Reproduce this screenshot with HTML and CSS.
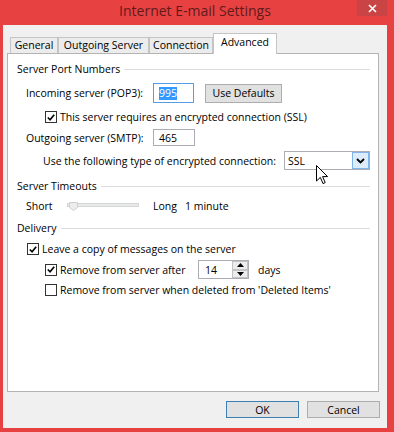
FILE: index.html
```html
<!DOCTYPE html>
<html lang="en">
<head>
    <meta charset="UTF-8">
    <title>Internet E-mail Settings</title>
    <link rel="stylesheet" href="styles.css">
</head>
<body>
    <div class="window">
        <div class="titlebar">
            <span></span>
            <div class="title">Internet E-mail Settings</div>
            <div class="close-wrap">
                <div class="close">
                    <svg width="9" height="9" viewBox="0 0 9 9"><path d="M1 1 L8 8 M8 1 L1 8" stroke="#fff" stroke-width="1.6"/></svg>
                </div>
            </div>
        </div>

        <div class="client">
            <div class="tabs">
                <div class="tab tab-general">General</div>
                <div class="tab tab-outgoing">Outgoing Server</div>
                <div class="tab tab-connection">Connection</div>
                <div class="tab tab-advanced active">Advanced</div>
            </div>

            <div class="panel">
                <div class="group group-ports">
                    <span>Server Port Numbers</span><div class="rule"></div>
                </div>
                <div class="row row-incoming">
                    <label class="field-label">Incoming server (POP3):</label>
                    <div class="textbox focused port-in"><span class="selected-text">995</span></div>
                    <button class="btn btn-defaults">Use Defaults</button>
                </div>
                <div class="row row-ssl">
                    <span class="check checked"><svg width="11" height="11" viewBox="0 0 11 11"><path d="M2 5.5 L4.5 8 L9 2.5" fill="none" stroke="#000" stroke-width="1.8"/></svg></span>
                    <span>This server requires an encrypted connection (SSL)</span>
                </div>
                <div class="row row-outgoing">
                    <label class="field-label">Outgoing server (SMTP):</label>
                    <div class="textbox port-out">465</div>
                </div>
                <div class="row row-encrypt">
                    <label class="encrypt-label">Use the following type of encrypted connection:</label>
                    <div class="select">
                        <span class="select-value">SSL</span>
                        <span class="select-btn"><svg width="9" height="6" viewBox="0 0 9 6"><path d="M1 1 L4.5 4.5 L8 1" fill="none" stroke="#000" stroke-width="1.8"/></svg></span>
                        <svg class="cursor" width="13" height="21" viewBox="0 0 13 21"><path d="M0.5 0.5 L0.5 16 L4.3 12.4 L7 18.6 L9.2 17.6 L6.6 11.6 L11.6 11.6 Z" fill="#fff" stroke="#000" stroke-width="1"/></svg>
                    </div>
                </div>

                <div class="group group-timeouts">
                    <span>Server Timeouts</span><div class="rule"></div>
                </div>
                <div class="row row-timeout">
                    <span class="short-label">Short</span>
                    <svg class="slider" width="72" height="10" viewBox="0 0 72 10">
                        <rect x="0.5" y="1.5" width="71" height="3" fill="#e7eaea" stroke="#d6d6d6"/>
                        <path d="M2.5 0.5 L10.5 0.5 L10.5 5.5 L6.5 8.5 L2.5 5.5 Z" fill="#ececec" stroke="#cfcfcf"/>
                    </svg>
                    <span class="long-label">Long</span>
                    <span>1 minute</span>
                </div>

                <div class="group group-delivery">
                    <span>Delivery</span><div class="rule"></div>
                </div>
                <div class="row row-leave">
                    <span class="check checked"><svg width="11" height="11" viewBox="0 0 11 11"><path d="M2 5.5 L4.5 8 L9 2.5" fill="none" stroke="#000" stroke-width="1.8"/></svg></span>
                    <span>Leave a copy of messages on the server</span>
                </div>
                <div class="row row-remove-after">
                    <span class="check checked"><svg width="11" height="11" viewBox="0 0 11 11"><path d="M2 5.5 L4.5 8 L9 2.5" fill="none" stroke="#000" stroke-width="1.8"/></svg></span>
                    <span class="remove-label">Remove from server after</span>
                    <div class="spinner">
                        <span class="spinner-value">14</span>
                        <span class="spinner-btns">
                            <span class="spin"><svg width="7" height="4" viewBox="0 0 7 4"><path d="M0 4 L3.5 0 L7 4 Z" fill="#000"/></svg></span>
                            <span class="spin"><svg width="7" height="4" viewBox="0 0 7 4"><path d="M0 0 L3.5 4 L7 0 Z" fill="#000"/></svg></span>
                        </span>
                    </div>
                    <span class="days">days</span>
                </div>
                <div class="row row-remove-deleted">
                    <span class="check"></span>
                    <span>Remove from server when deleted from 'Deleted Items'</span>
                </div>
            </div>

            <div class="buttons">
                <button class="btn btn-dialog default">OK</button>
                <button class="btn btn-dialog">Cancel</button>
            </div>
        </div>
    </div>
</body>
</html>
```

FILE: styles.css
```css
body {
    margin: 0;
    padding: 0;
    background-color: #e84142;
    font-family: "Segoe UI", "Open Sans", sans-serif;
    font-size: 10.5px;
    color: #000;
}

.window {
    width: 394px;
    height: 432px;
    padding: 0 7px 4px 3px;
    box-sizing: border-box;
}

.titlebar {
    height: 25px;
    display: grid;
    grid-template-columns: 1fr auto 1fr;
}

.title {
    font-size: 14px;
    line-height: 22px;
    color: #5e1b1b;
}

.close-wrap {
    display: flex;
    justify-content: flex-end;
}

.close {
    width: 30px;
    height: 16px;
    background-color: #c94545;
    display: flex;
    align-items: center;
    justify-content: center;
}

.client {
    height: 403px;
    background-color: #f0f0f0;
    padding: 8px 8px 0 4px;
    box-sizing: border-box;
}

/* tabs */

.tabs {
    display: flex;
    align-items: flex-end;
    height: 21px;
    margin-bottom: -1px;
    padding-left: 3px;
}

.tab {
    height: 16px;
    margin-bottom: 1px;
    box-sizing: border-box;
    border: 1px solid #c4c4c4;
    border-bottom: none;
    background-color: #ececec;
    text-align: center;
    line-height: 14px;
    white-space: nowrap;
}

.tab-general { width: 48px; }
.tab-outgoing { width: 91px; }
.tab-connection { width: 64px; }

.tab-advanced {
    width: 64px;
}

.tab.active {
    position: relative;
    height: 21px;
    margin-bottom: 0;
    background-color: #fff;
    line-height: 16px;
}

.panel {
    height: 339px;
    box-sizing: border-box;
    background-color: #fff;
    border: 1px solid #b4b4b4;
    padding: 7px 8px 0 9px;
}

/* group headers */

.group {
    height: 16px;
    display: flex;
    align-items: center;
    white-space: nowrap;
}

.group .rule {
    flex: 1;
    margin-left: 4px;
    border-top: 1px solid #dcdcdc;
}

.group-timeouts { margin-top: 8px; }
.group-delivery { margin-top: 6px; }

.row {
    display: flex;
    align-items: center;
    white-space: nowrap;
}

.row-incoming { height: 20px; margin-top: 6px; padding-left: 9px; }
.row-ssl { height: 14px; margin-top: 7px; padding-left: 28px; }
.row-outgoing { height: 17px; margin-top: 5px; padding-left: 9px; }
.row-encrypt { height: 19px; margin-top: 5px; padding-left: 26px; }
.row-timeout { height: 16px; margin-top: 4px; padding-left: 9px; }
.row-leave { height: 14px; margin-top: 6px; padding-left: 10px; }
.row-remove-after { height: 19px; margin-top: 4px; padding-left: 28px; }
.row-remove-deleted { height: 14px; margin-top: 4px; padding-left: 28px; }

.field-label {
    width: 127px;
}

.encrypt-label {
    width: 241px;
}

/* inputs */

.textbox {
    box-sizing: border-box;
    height: 100%;
    border: 1px solid #abadb3;
    background-color: #fff;
    display: flex;
    align-items: center;
    padding-left: 5px;
}

.textbox.focused {
    border-color: #569de5;
}

.port-in { width: 41px; }
.port-out { width: 42px; }

.selected-text {
    background-color: #3399ff;
    color: #fff;
    line-height: 13px;
}

.btn {
    font-family: inherit;
    font-size: inherit;
    box-sizing: border-box;
    border: 1px solid #adadad;
    background-color: #e1e1e1;
    padding: 0;
    color: #000;
}

.btn-defaults {
    width: 77px;
    height: 19px;
    margin-left: 11px;
}

.check {
    width: 12px;
    height: 12px;
    box-sizing: border-box;
    border: 1px solid #333;
    background-color: #fff;
    display: flex;
    align-items: center;
    justify-content: center;
    margin-right: 3px;
}

.select {
    position: relative;
    width: 86px;
    height: 100%;
    box-sizing: border-box;
    border: 1px solid #abadb3;
    background-color: #fff;
    display: flex;
    align-items: center;
}

.select-value {
    flex: 1;
    padding-left: 3px;
}

.select-btn {
    width: 17px;
    height: 17px;
    box-sizing: border-box;
    border: 1px solid #7eb4ea;
    background-color: #dcecfc;
    display: flex;
    align-items: center;
    justify-content: center;
}

.cursor {
    position: absolute;
    left: 31px;
    top: 13px;
}

/* timeout slider */

.short-label {
    width: 41px;
}

.slider {
    margin-top: 2px;
}

.long-label {
    margin-left: 14px;
    width: 32px;
}

/* spinner */

.remove-label {
    width: 138px;
}

.spinner {
    width: 51px;
    height: 100%;
    box-sizing: border-box;
    border: 1px solid #abadb3;
    display: flex;
}

.spinner-value {
    flex: 1;
    padding-left: 6px;
    display: flex;
    align-items: center;
}

.spinner-btns {
    width: 16px;
    display: flex;
    flex-direction: column;
}

.spin {
    flex: 1;
    box-sizing: border-box;
    border: 1px solid #c2c2c2;
    background-color: #ececec;
    display: flex;
    align-items: center;
    justify-content: center;
}

.days {
    margin-left: 9px;
}

/* bottom buttons */

.buttons {
    display: flex;
    justify-content: flex-end;
    gap: 8px;
    margin-top: 9px;
    margin-right: -1px;
}

.btn-dialog {
    width: 73px;
    height: 17px;
}

.btn-dialog.default {
    border-color: #3c7fb1;
}
```
